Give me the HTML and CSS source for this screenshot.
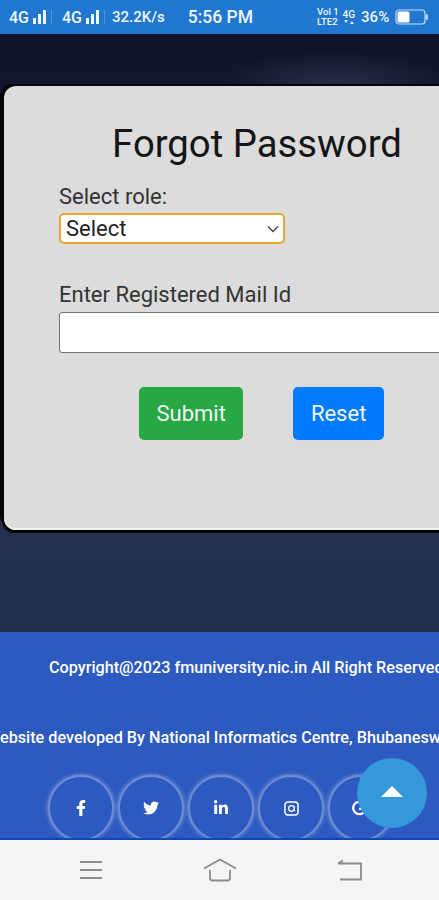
FILE: index.html
```html
<!DOCTYPE html>
<html lang="en">
<head>
  <meta charset="UTF-8" />
  <meta name="viewport" content="width=device-width, initial-scale=1" />
  <title>Forgot Password</title>
  <link rel="stylesheet" href="styles.css">
</head>
<body>
  <div class="screen">

    <div class="status-bar">
      <span class="net">4G</span>
      <svg class="bars" viewBox="0 0 20 14"><rect x="0" y="8" width="3" height="6"/><rect x="5" y="4" width="3" height="10"/><rect x="10" y="0" width="3" height="14"/><rect class="divider" x="18" y="0" width="1" height="14"/></svg>
      <span class="net net-two">4G</span>
      <svg class="bars" viewBox="0 0 20 14"><rect x="0" y="8" width="3" height="6"/><rect x="5" y="4" width="3" height="10"/><rect x="10" y="0" width="3" height="14"/><rect class="divider" x="18" y="0" width="1" height="14"/></svg>
      <span class="speed">32.2K/s</span>
      <span class="clock">5:56 PM</span>
      <span class="volte"><span>Vol 1</span><span>LTE2</span></span>
      <span class="small-net"><span>4G</span><svg viewBox="0 0 10 5"><path d="M0 0h4L2 3zM6 4h4L8 1z"/></svg></span>
      <span class="percent">36%</span>
      <svg class="battery" viewBox="0 0 33 16">
        <rect x="1" y="1" width="29" height="14" rx="3" fill="none" stroke="#fff" stroke-width="1.2" opacity="0.75"/>
        <rect x="2.500" y="2.500" width="12" height="11" rx="1.500" fill="#fff"/>
        <rect x="31" y="5" width="1.800" height="6" rx="0.900" fill="#fff" opacity="0.75"/>
      </svg>
    </div>

    <main class="hero">
      <form class="card">
        <h1>Forgot Password</h1>
        <label class="field-label" for="role">Select role:</label>
        <select class="role-select" id="role">
          <option>Select</option>
        </select>
        <label class="field-label mail-label" for="mail">Enter Registered Mail Id</label>
        <input class="mail-input" id="mail" type="text">
        <div class="actions">
          <button class="btn btn-submit" type="button">Submit</button>
          <button class="btn btn-reset" type="reset">Reset</button>
        </div>
      </form>
    </main>

    <footer class="footer">
      <p class="footer-line">Copyright@2023 fmuniversity.nic.in All Right Reserved</p>
      <p class="footer-line dev-line">Website developed By National Informatics Centre, Bhubaneswar</p>
      <div class="socials">
        <a class="ring"><svg viewBox="0 0 320 512" height="16"><path d="M279.14 288l14.22-92.66h-88.91v-60.13c0-25.35 12.42-50.06 52.24-50.06h40.42V6.26S260.43 0 225.36 0c-73.22 0-121.08 44.38-121.08 124.72v70.62H22.89V288h81.39v224h100.17V288z"/></svg></a>
        <a class="ring"><svg viewBox="0 0 512 512" height="16"><path d="M459.37 151.716c.325 4.548.325 9.097.325 13.645 0 138.72-105.583 298.558-298.558 298.558-59.452 0-114.68-17.219-161.137-47.106 8.447.974 16.568 1.299 25.34 1.299 49.055 0 94.213-16.568 130.274-44.832-46.132-.975-84.792-31.188-98.112-72.772 6.498.974 12.995 1.624 19.818 1.624 9.421 0 18.843-1.3 27.614-3.573-48.081-9.747-84.143-51.98-84.143-102.985v-1.299c13.969 7.797 30.214 12.67 47.431 13.319-28.264-18.843-46.781-51.005-46.781-87.391 0-19.492 5.197-37.36 14.294-52.954 51.655 63.675 129.3 105.258 216.365 109.807-1.624-7.797-2.599-15.918-2.599-24.04 0-57.828 46.782-104.934 104.934-104.934 30.213 0 57.502 12.67 76.67 33.137 23.715-4.548 46.456-13.32 66.599-25.34-7.798 24.366-24.366 44.833-46.132 57.827 21.117-2.273 41.584-8.122 60.426-16.243-14.292 20.791-32.161 39.308-52.628 54.253z"/></svg></a>
        <a class="ring"><svg viewBox="0 0 448 512" height="16"><path d="M100.28 448H7.4V148.9h92.88zM53.79 108.1C24.09 108.1 0 83.5 0 53.8a53.79 53.79 0 0 1 107.58 0c0 29.7-24.1 54.3-53.79 54.3zM447.9 448h-92.68V302.4c0-34.7-.7-79.2-48.29-79.2-48.29 0-55.69 37.7-55.69 76.7V448h-92.78V148.9h89.08v40.8h1.3c12.4-23.5 42.69-48.3 87.88-48.3 94 0 111.28 61.9 111.28 142.3V448z"/></svg></a>
        <a class="ring"><svg viewBox="0 0 16 16" height="15" fill="none" stroke="#fff"><rect x="1" y="1" width="14" height="14" rx="3.500" stroke-width="1.600"/><circle cx="8" cy="8" r="3" stroke-width="1.400"/><path d="M11 6v3q0 1.500 1 1.500" stroke-width="1"/></svg></a>
        <a class="ring ring-google"><svg viewBox="0 0 16 16" height="15" fill="none" stroke="#fff" stroke-width="2.400"><path d="M13.500 4A6.600 6.600 0 1 0 14.400 8.400H7.500"/></svg></a>
      </div>
    </footer>

    <nav class="nav-bar">
      <svg class="nav-icon" viewBox="0 0 24 20" width="24" height="20"><path d="M1 2h22M1 10h22M1 18h22"/></svg>
      <svg class="nav-icon" viewBox="0 0 34 24" width="34" height="24"><path d="M1 10.500 17 1.500l16 9M7 12v8q0 2.500 2.500 2.500h15q2.500 0 2.500-2.500v-8"/></svg>
      <svg class="nav-icon" viewBox="0 0 26 22" width="26" height="22"><path d="M1 4.500h23v16H3M1 4.500 6 1.500"/></svg>
    </nav>

    <button class="scroll-top" type="button" aria-label="Back to top"><span class="arrow-up"></span></button>
  </div>
</body>
</html>
```

FILE: styles.css
```css
body {
  margin: 0;
  background: #1a2238;
  font-family: Roboto, "Liberation Sans", sans-serif;
  color: #1c1c1c;
}
.screen {
  position: relative;
  display: flex;
  flex-direction: column;
  width: 439px;
  height: 900px;
  overflow: hidden;
}

/* status bar */
.status-bar {
  display: flex;
  align-items: center;
  height: 34px;
  padding-left: 9px;
  background: #1f77d0;
  color: #f1f6fc;
  font-size: 15px;
  font-weight: 500;
  white-space: nowrap;
}
.net {
  font-size: 16px;
}
.bars {
  width: 20px;
  height: 14px;
  margin-left: 4px;
  fill: #f1f6fc;
}
.divider {
  opacity: 0.25;
}
.net-two {
  margin-left: 9px;
}
.speed {
  margin-left: 6px;
}
.clock {
  margin-left: 23px;
  font-size: 17.5px;
}
.volte {
  display: flex;
  flex-direction: column;
  margin-left: 64px;
  font-size: 9.5px;
  line-height: 10px;
}
.small-net {
  display: flex;
  flex-direction: column;
  align-items: center;
  margin-left: 4px;
  font-size: 10px;
  line-height: 11px;
}
.small-net svg {
  width: 10px;
  height: 5px;
  fill: #f1f6fc;
}
.percent {
  margin-left: 6px;
}
.battery {
  width: 33px;
  height: 16px;
  margin-left: 6px;
}

/* dark hero with the form card */
.hero {
  height: 598px;
  padding: 52px 0 0 4px;
  box-sizing: border-box;
  background:
    radial-gradient(ellipse 110px 28px at 335px 46px, rgba(120, 130, 155, 0.2), transparent),
    linear-gradient(#10142a, #15203a 45%, #24324f 85%, #212f4c);
}
.card {
  display: flex;
  flex-direction: column;
  align-items: flex-start;
  width: 504px;
  height: 444px;
  padding: 35px 0 0 55px;
  box-sizing: border-box;
  background: #dcdcdc;
  border-radius: 12px;
  box-shadow: inset 0 -2px 0 #f2f2f2, -4px -2px 0 #050505, -2px 3px 0 #050505;
}
h1 {
  align-self: stretch;
  margin: 0 0 17px -53px;
  font-size: 38.3px;
  font-weight: 400;
  line-height: 46px;
  text-align: center;
  color: #151515;
}
.field-label {
  font-size: 22px;
  line-height: 26px;
  color: #333;
}
.role-select {
  width: 226px;
  height: 31px;
  margin-top: 3px;
  padding: 0 5px;
  appearance: none;
  background: #fff url("data:image/svg+xml,%3Csvg xmlns='http://www.w3.org/2000/svg' width='12' height='8'%3E%3Cpath d='M1 1.500 6 6.500 11 1.500' fill='none' stroke='%23444' stroke-width='1.300'/%3E%3C/svg%3E") no-repeat right 4px center;
  border: 2px solid #e5a632;
  border-radius: 5px;
  font-family: inherit;
  font-size: 22px;
  color: #222;
}
.mail-label {
  margin-top: 38px;
}
.mail-input {
  width: 440px;
  height: 41px;
  margin-top: 4px;
  padding: 0 8px;
  box-sizing: border-box;
  background: #fff;
  border: 1px solid #767676;
  border-radius: 3px;
}
.actions {
  display: flex;
  gap: 50px;
  margin: 34px 0 0 80px;
}
.btn {
  height: 53px;
  padding: 0 17.500px;
  border: 0;
  border-radius: 5px;
  color: #f2f6fb;
  font-family: inherit;
  font-size: 22px;
}
.btn-submit {
  background: #28a745;
}
.btn-reset {
  background: #007bff;
}

/* footer */
.footer {
  flex: 1;
  min-height: 0;
  overflow: hidden;
  background: #2c5ac0;
  border-bottom: 2px solid #0f48b4;
  color: #fff;
}
.footer-line {
  margin: 0;
  padding: 26px 0 0 49px;
  font-size: 16.2px;
  font-weight: 500;
  line-height: 19px;
  white-space: nowrap;
}
.dev-line {
  padding: 51px 0 0;
  margin-left: -14px;
}
.socials {
  display: flex;
  gap: 4px;
  margin: 28px 0 0 48px;
}
.ring {
  display: flex;
  flex: none;
  align-items: center;
  justify-content: center;
  width: 62px;
  height: 62px;
  border: 2px solid rgba(255, 255, 255, 0.3);
  border-radius: 50%;
  box-shadow: 0 0 4px rgba(255, 255, 255, 0.45);
  fill: #fff;
}
.ring-google svg {
  margin-right: 3px;
}

/* android nav */
.nav-bar {
  display: flex;
  align-items: center;
  justify-content: space-between;
  height: 60px;
  padding: 0 76px 0 79px;
  box-sizing: border-box;
  background: #f5f5f5;
}
.nav-icon {
  fill: none;
  stroke: #8a8a8a;
  stroke-width: 1.800;
}

.scroll-top {
  position: absolute;
  top: 758px;
  left: 357px;
  width: 70px;
  height: 70px;
  padding: 0;
  border: 0;
  border-radius: 50%;
  background: #3498db;
}
.arrow-up {
  display: block;
  width: 0;
  height: 0;
  margin: -4px auto 0;
  border-left: 11px solid transparent;
  border-right: 11px solid transparent;
  border-bottom: 11px solid #fff;
}
```
